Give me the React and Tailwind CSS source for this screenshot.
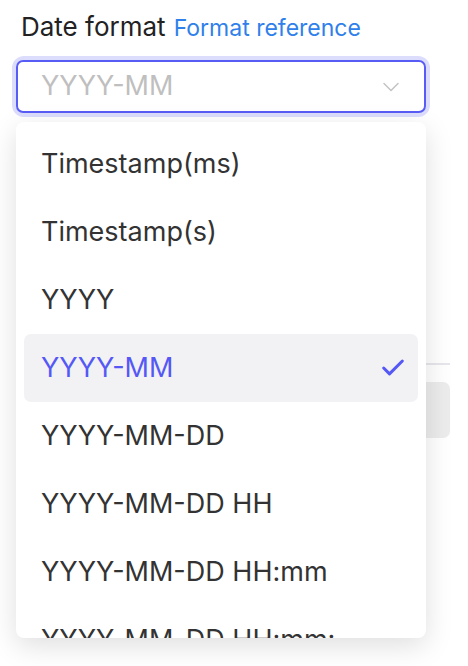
import { Check, ChevronDown } from "lucide-react";

const options = [
  "Timestamp(ms)",
  "Timestamp(s)",
  "YYYY",
  "YYYY-MM",
  "YYYY-MM-DD",
  "YYYY-MM-DD HH",
  "YYYY-MM-DD HH:mm",
  "YYYY-MM-DD HH:mm:",
];

const App = () => {
  const selected = "YYYY-MM";

  return (
    <div
      className="relative min-h-[666px] w-[468px] overflow-hidden bg-white pl-4 pr-[18px] pt-[10px]"
      style={{ fontFamily: "Inter, 'Noto Sans', sans-serif" }}
    >
      {/* label */}
      <div className="flex items-baseline gap-[8px] pl-[5px] leading-[34px]">
        <span className="text-[26px] text-[#222]">Date format</span>
        <span className="text-[23px] text-[#2f80ea]">Format reference</span>
      </div>

      {/* select */}
      <div className="mt-[15px] w-[410px] rounded-[8px] ring-4 ring-[#dcdcfc]">
        <div className="flex h-[53px] items-center justify-between rounded-[7px] border-2 border-[#585cf6] bg-white pl-[23px] pr-[19px]">
          <span className="text-[27px] text-[#bfbfbf]">YYYY-MM</span>
          <ChevronDown size={28} strokeWidth={1.3} className="text-[#c4c4c4]" />
        </div>
      </div>

      {/* content behind the popup */}
      <div className="mt-[250px] h-[2px] w-full bg-[#e6e6ec]" />
      <div className="mt-[17px] h-[56px] w-full rounded-[7px] bg-[#ececec]" />

      {/* dropdown */}
      <div className="absolute left-4 top-[122px] h-[516px] w-[410px] overflow-hidden rounded-[8px] bg-white px-2 pt-2 shadow-[0_8px_28px_rgba(0,0,0,0.13)]">
        {options.map((opt) => {
          const active = opt === selected;
          return (
            <div
              key={opt}
              className={`flex h-[68px] items-center justify-between rounded-[7px] pl-[17px] pr-[11px] text-[27px] ${
                active ? "bg-[#f2f2f5] text-[#5558f5]" : "text-[#333]"
              }`}
            >
              <span>{opt}</span>
              {active && <Check size={28} strokeWidth={2.6} className="text-[#5558f5]" />}
            </div>
          );
        })}
      </div>
    </div>
  );
};

export default App;
